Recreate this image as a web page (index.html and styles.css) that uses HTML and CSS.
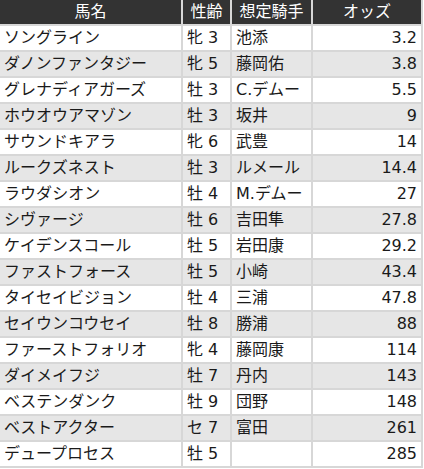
FILE: index.html
```html
<!DOCTYPE html>
<html lang="ja">
<head>
<meta charset="utf-8">
<link rel="stylesheet" href="styles.css">
</head>
<body>
<table class="odds">
<colgroup><col class="c-name"><col class="c-age"><col class="c-jockey"><col class="c-odds"></colgroup>
<thead>
<tr><th>馬名</th><th>性齢</th><th>想定騎手</th><th>オッズ</th></tr>
</thead>
<tbody>
<tr><td>ソングライン</td><td>牝 3</td><td>池添</td><td class="num">3.2</td></tr>
<tr><td>ダノンファンタジー</td><td>牝 5</td><td>藤岡佑</td><td class="num">3.8</td></tr>
<tr><td>グレナディアガーズ</td><td>牡 3</td><td>C.デムー</td><td class="num">5.5</td></tr>
<tr><td>ホウオウアマゾン</td><td>牡 3</td><td>坂井</td><td class="num">9</td></tr>
<tr><td>サウンドキアラ</td><td>牝 6</td><td>武豊</td><td class="num">14</td></tr>
<tr><td>ルークズネスト</td><td>牡 3</td><td>ルメール</td><td class="num">14.4</td></tr>
<tr><td>ラウダシオン</td><td>牡 4</td><td>M.デムー</td><td class="num">27</td></tr>
<tr><td>シヴァージ</td><td>牡 6</td><td>吉田隼</td><td class="num">27.8</td></tr>
<tr><td>ケイデンスコール</td><td>牡 5</td><td>岩田康</td><td class="num">29.2</td></tr>
<tr><td>ファストフォース</td><td>牡 5</td><td>小崎</td><td class="num">43.4</td></tr>
<tr><td>タイセイビジョン</td><td>牡 4</td><td>三浦</td><td class="num">47.8</td></tr>
<tr><td>セイウンコウセイ</td><td>牡 8</td><td>勝浦</td><td class="num">88</td></tr>
<tr><td>ファーストフォリオ</td><td>牝 4</td><td>藤岡康</td><td class="num">114</td></tr>
<tr><td>ダイメイフジ</td><td>牡 7</td><td>丹内</td><td class="num">143</td></tr>
<tr><td>ベステンダンク</td><td>牡 9</td><td>団野</td><td class="num">148</td></tr>
<tr><td>ベストアクター</td><td>セ 7</td><td>富田</td><td class="num">261</td></tr>
<tr><td>デュープロセス</td><td>牡 5</td><td></td><td class="num">285</td></tr>
</tbody>
</table>
</body>
</html>
```

FILE: styles.css
```css
html, body {
  margin: 0;
  padding: 0;
  background: #ffffff;
}

.odds {
  border-collapse: separate;
  border-spacing: 2px;
  background: #d7d7d7;
  margin: -2px 0 0 -2px;
  table-layout: fixed;
  width: 425px;
  font-family: "DejaVu Sans", "Noto Sans CJK JP", sans-serif;
  font-size: 16px;
  color: #1a1a1a;
}

.c-name { width: 181px; }
.c-age { width: 47px; }
.c-jockey { width: 79px; }
.c-odds { width: 108px; }

.odds th,
.odds td {
  height: 24px;
  line-height: 24px;
  padding: 0 4px;
  white-space: nowrap;
  overflow: hidden;
  box-sizing: border-box;
}

.odds th {
  background: #333333;
  color: #ffffff;
  font-weight: normal;
  text-align: center;
  padding: 0 2px;
}

.odds td {
  background: #ffffff;
  text-align: left;
}

.odds tbody tr:nth-child(even) td {
  background: #e6e6e6;
}

.odds td.num {
  text-align: right;
}
```
